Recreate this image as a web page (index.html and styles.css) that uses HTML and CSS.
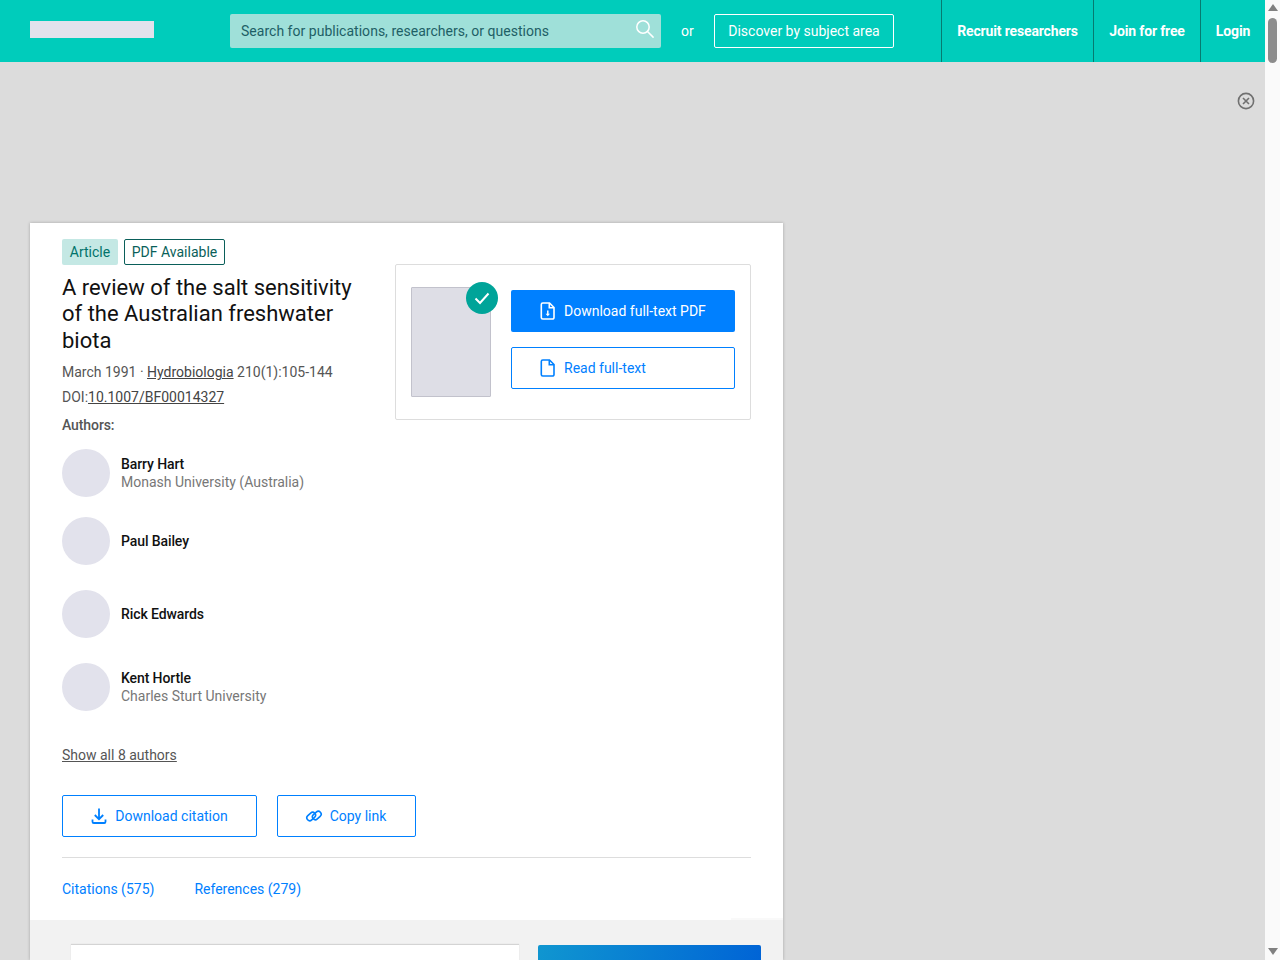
FILE: index.html
```html
<!DOCTYPE html>
<html lang="en">
<head>
<meta charset="utf-8">
<title>A review of the salt sensitivity of the Australian freshwater biota</title>
<link rel="stylesheet" href="styles.css">
</head>
<body>
<div class="window">
  <div class="page">
    <header class="topbar">
      <div class="logo"></div>
      <div class="search">
        <span class="search-text">Search for publications, researchers, or questions</span>
        <svg class="search-icon" width="20" height="20" viewBox="0 0 20 20" fill="none" stroke="#fff" stroke-width="1.5"><circle cx="8" cy="8" r="6.2"/><path d="M12.5 12.5l5.6 5.6" stroke-linecap="round"/></svg>
      </div>
      <span class="or">or</span>
      <a class="discover">Discover by subject area</a>
      <nav class="nav">
        <a class="nav-item nav-recruit">Recruit researchers</a>
        <a class="nav-item nav-join">Join for free</a>
        <a class="nav-item nav-login">Login</a>
      </nav>
    </header>
    <div class="ad">
      <svg class="close" width="18" height="18" viewBox="0 0 18 18" fill="none" stroke="#707070" stroke-width="1.6"><circle cx="9" cy="9" r="7.6"/><path d="M6 6l6 6M12 6l-6 6"/></svg>
    </div>
    <main class="card">
      <section class="head">
        <div class="tags">
          <span class="tag tag-article">Article</span>
          <span class="tag tag-pdf">PDF Available</span>
        </div>
        <div class="columns">
          <div class="info">
            <h1 class="title">A review of the salt sensitivity of the Australian freshwater biota</h1>
            <p class="meta meta-date">March 1991 · <a class="link">Hydrobiologia</a> 210(1):105-144</p>
            <p class="meta meta-doi">DOI:<a class="link">10.1007/BF00014327</a></p>
            <p class="authors-label">Authors:</p>
            <ul class="authors">
              <li class="author author-a"><span class="avatar"></span><div><div class="name">Barry Hart</div><div class="inst">Monash University (Australia)</div></div></li>
              <li class="author author-b"><span class="avatar"></span><div><div class="name">Paul Bailey</div></div></li>
              <li class="author author-b"><span class="avatar"></span><div><div class="name">Rick Edwards</div></div></li>
              <li class="author author-a"><span class="avatar"></span><div><div class="name">Kent Hortle</div><div class="inst">Charles Sturt University</div></div></li>
            </ul>
          </div>
          <aside class="download-box">
            <div class="thumb">
              <span class="check"><svg width="18" height="18" viewBox="0 0 18 18" fill="none" stroke="#fff" stroke-width="2"><path d="M2.5 9.5l4.500 4.500 8.500-9.500"/></svg></span>
            </div>
            <div class="download-actions">
              <a class="btn btn-primary">
                <svg width="16" height="18" viewBox="0 0 16 18" fill="none" stroke="#fff" stroke-width="1.6"><path d="M2.800 1h6.700L14 5.500V15.500a1.500 1.500 0 0 1-1.500 1.500H2.800a1.500 1.500 0 0 1-1.500-1.500V2.500A1.500 1.500 0 0 1 2.800 1z"/><path d="M9.300 1v4.700H14"/><path d="M7.800 8.500v4.500" stroke-width="1.500"/><path d="M5.600 11.800h4.400L7.800 14.200z" fill="#fff" stroke="none"/></svg>
                Download full-text PDF
              </a>
              <a class="btn btn-outline btn-read">
                <svg width="16" height="18" viewBox="0 0 16 18" fill="none" stroke="#0080ff" stroke-width="1.6"><path d="M2.800 1h6.700L14 5.500V15.500a1.500 1.500 0 0 1-1.500 1.500H2.800a1.500 1.500 0 0 1-1.500-1.500V2.500A1.500 1.500 0 0 1 2.800 1z"/><path d="M9.300 1v4.700H14"/></svg>
                Read full-text
              </a>
            </div>
          </aside>
        </div>
        <a class="link show-all">Show all 8 authors</a>
        <div class="actions">
          <a class="btn btn-outline btn-cite">
            <svg width="16" height="18" viewBox="0 0 16 18" fill="none" stroke="#0080ff" stroke-width="1.8"><path d="M8 1.500v10.500M3.800 8l4.200 4.200L12.200 8"/><path d="M1.500 12.500v2.200a1.300 1.300 0 0 0 1.300 1.300h10.400a1.300 1.300 0 0 0 1.300-1.300v-2.200"/></svg>
            Download citation
          </a>
          <a class="btn btn-outline btn-copy">
            <svg width="18" height="14" viewBox="0 0 18 14" fill="none" stroke="#0080ff" stroke-width="1.6"><rect x="1.400" y="4.600" width="9.600" height="5.800" rx="2.900" transform="rotate(-42 6.200 7.500)"/><rect x="7" y="3.600" width="9.600" height="5.800" rx="2.900" transform="rotate(-42 11.800 6.500)"/></svg>
            Copy link
          </a>
        </div>
        <div class="tabs">
          <a class="tab">Citations (575)</a>
          <a class="tab">References (279)</a>
        </div>
      </section>
      <section class="lower">
        <div class="lower-left"></div>
        <div class="lower-right"></div>
      </section>
    </main>
  </div>
  <div class="scrollbar">
    <span class="arrow arrow-up"></span>
    <span class="thumb-bar"></span>
    <span class="track"></span>
    <span class="arrow arrow-down"></span>
  </div>
</div>
</body>
</html>
```

FILE: styles.css
```css
* { box-sizing: border-box; }
html, body { margin: 0; padding: 0; height: 960px; overflow: hidden; }
body { font-family: Roboto, "Liberation Sans", sans-serif; font-size: 14px; color: #111; background: #dcdcdc; }
a { text-decoration: none; color: inherit; }
p, h1, ul { margin: 0; padding: 0; }
ul { list-style: none; }

.window { display: flex; height: 960px; }
.page { flex: 1; min-width: 0; height: 960px; overflow: hidden; }

.scrollbar { width: 15px; background: #fafafa; display: flex; flex-direction: column; align-items: center; }
.arrow { width: 0; height: 0; border-left: 5px solid transparent; border-right: 5px solid transparent; flex: none; }
.arrow-up { border-bottom: 7px solid #808080; margin: 4px 0 5px; }
.arrow-down { border-top: 7px solid #808080; margin: 4px 0 5px; }
.thumb-bar { width: 9px; height: 45px; border-radius: 4.5px; background: #8c8c8c; margin-top: 2px; }
.track { flex: 1; }

.topbar { height: 62px; background: #00ccbb; display: flex; align-items: center; padding-left: 30px; color: #fff; }
.logo { width: 124px; height: 17px; background: #e2e2ec; margin: -3px 76px 0 0; }
.search { width: 431px; height: 34px; background: #9fe0d9; border-radius: 2px; display: flex; align-items: center; justify-content: space-between; padding: 0 6px 0 11px; }
.search-text { color: #1e5f66; font-size: 14px; letter-spacing: .02px; }
.search-icon { margin-top: -4px; }
.or { margin-left: 20px; width: 13px; font-size: 14px; }
.discover { margin-left: 20px; width: 180px; height: 34px; border: 1px solid #fff; border-radius: 2px; display: flex; align-items: center; justify-content: center; font-size: 14px; }
.nav { margin-left: auto; display: flex; height: 62px; }
.nav-item { height: 62px; display: flex; align-items: center; justify-content: center; border-left: 1px solid #067a70; font-weight: 700; font-size: 14px; letter-spacing: -0.15px; }
.nav-recruit { width: 152px; }
.nav-join { width: 107px; }
.nav-login { width: 65px; }

.ad { height: 161px; display: flex; justify-content: flex-end; align-items: flex-start; padding: 30px 10px 0 0; }

.card { width: 753px; margin-left: 30px; height: 737px; background: #fff; box-shadow: 0 0 3px rgba(0,0,0,.25); display: flex; flex-direction: column; }
.head { padding: 16px 32px 0; height: 697px; flex: none; }

.tags { display: flex; gap: 6px; height: 26px; }
.tag { height: 26px; border-radius: 2px; display: flex; align-items: center; }
.tag-article { width: 56px; justify-content: center; background: #c4e8e4; color: #00736b; font-size: 14px; }
.tag-pdf { width: 101px; justify-content: center; border: 1px solid #0a5f5a; color: #0a5f5a; font-size: 14px; }

.columns { display: flex; justify-content: space-between; align-items: flex-start; }
.info { width: 300px; }
.title { font-weight: 400; font-size: 22px; line-height: 26.4px; color: #111; margin-top: 10px; }
.meta { color: #555; font-size: 14px; line-height: 20px; }
.meta-date { margin-top: 8px; }
.meta-doi { margin-top: 5px; }
.link { text-decoration: underline; color: #444; }
.authors-label { margin-top: 8px; line-height: 20px; font-weight: 500; color: #555; letter-spacing: -0.1px; }

.authors { margin-top: 14px; }
.author { display: flex; align-items: center; gap: 11px; white-space: nowrap; height: 48px; }
.author + .author { margin-top: 20px; }
.author-b + .author-b, .author-b + .author-a { margin-top: 25px; }
.avatar { width: 48px; height: 48px; border-radius: 50%; background: #e2e2ec; flex: none; }
.name { font-weight: 500; font-size: 14px; line-height: 18px; color: #111; letter-spacing: -0.1px; }
.inst { font-size: 14px; line-height: 18px; color: #777; }

.download-box { width: 356px; height: 156px; margin-top: -1px; border: 1px solid #ddd; border-radius: 2px; padding: 22px 15px; display: flex; gap: 20px; }
.thumb { width: 80px; height: 110px; background: #dedee6; border: 1px solid #c2c2cc; border-radius: 1px; position: relative; flex: none; }
.check { position: absolute; top: -6px; right: -8px; width: 32px; height: 32px; border-radius: 50%; background: #00a499; display: flex; align-items: center; justify-content: center; }
.download-actions { width: 224px; padding-top: 3px; display: flex; flex-direction: column; gap: 15px; }
.btn { height: 42px; border-radius: 2px; display: flex; align-items: center; font-size: 14px; gap: 8px; }
.btn-primary { background: #0080ff; color: #fff; padding-left: 29px; }
.btn-outline { border: 1px solid #0080ff; color: #0080ff; background: #fff; }
.btn-read { padding-left: 28px; }

.show-all { display: block; width: fit-content; margin-top: 34px; line-height: 20px; font-size: 14px; color: #555; }
.actions { display: flex; gap: 20px; margin-top: 30px; }
.btn-cite { width: 195px; justify-content: center; }
.btn-copy { width: 139px; justify-content: center; gap: 7px; padding-right: 2px; }

.tabs { display: flex; gap: 40px; margin-top: 20px; border-top: 1px solid #ddd; padding-top: 21px; }
.tab { color: #0080ff; line-height: 20px; font-size: 14px; }

.lower { flex: 1; background: #f2f2f2; padding: 25px 22px 0 41px; display: flex; justify-content: space-between; position: relative; }
.lower::before { content: ""; position: absolute; top: -2px; right: 0; width: 52px; height: 2px; background: #f9f9f9; }
.lower-left { width: 448px; height: 40px; background: #fff; box-shadow: 0 -1px 1px rgba(0,0,0,.12); }
.lower-right { width: 223px; height: 40px; background: linear-gradient(100deg, #1096d0, #0063d6); border-radius: 2px 2px 0 0; }
```
